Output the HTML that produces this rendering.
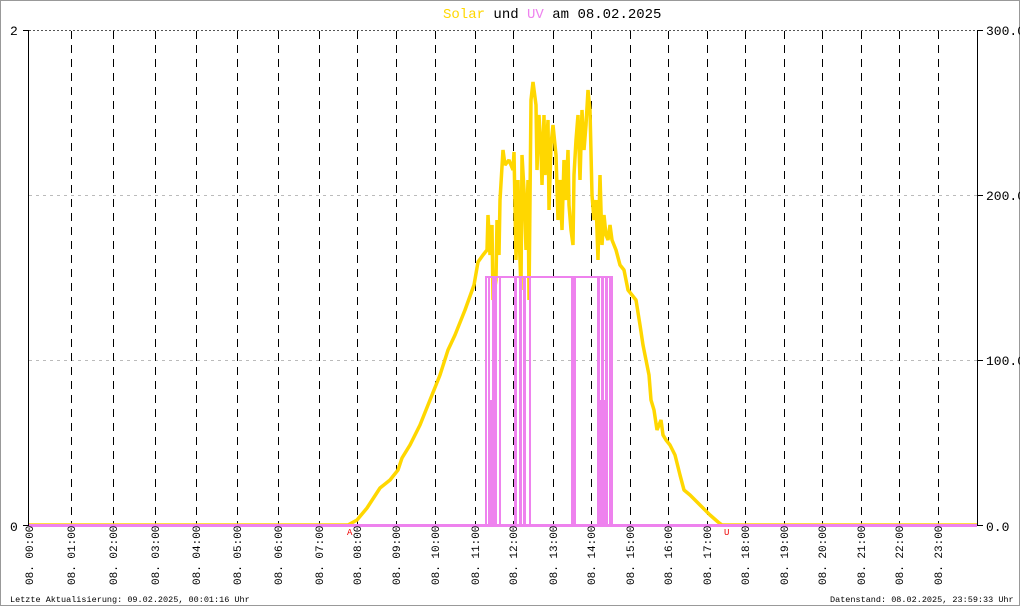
<!DOCTYPE html>
<html><head><meta charset="utf-8"><style>
html,body{margin:0;padding:0;background:#fff}
svg{display:block}
text{font-family:"Liberation Mono","DejaVu Sans Mono",monospace}
</style></head><body>
<svg width="1020" height="606" viewBox="0 0 1020 606" xmlns="http://www.w3.org/2000/svg">
<rect x="0.5" y="0.5" width="1019" height="605" fill="#fff" stroke="#999"/>
<text x="443" y="18" font-size="14"><tspan fill="#ffd700">Solar</tspan><tspan fill="#000"> und </tspan><tspan fill="#ee82ee">UV</tspan><tspan fill="#000"> am 08.02.2025</tspan></text>
<g stroke="#bbb" stroke-dasharray="3,4">
<line x1="29" y1="195.5" x2="977" y2="195.5"/>
<line x1="29" y1="360.5" x2="977" y2="360.5"/>
</g>
<line x1="29" y1="30.5" x2="977" y2="30.5" stroke="#555" stroke-dasharray="2,2"/>
<g stroke="#000" stroke-dasharray="8,6">
<line x1="71.5" y1="31" x2="71.5" y2="526"/><line x1="113.5" y1="31" x2="113.5" y2="526"/>
<line x1="155.5" y1="31" x2="155.5" y2="526"/><line x1="196.5" y1="31" x2="196.5" y2="526"/>
<line x1="237.5" y1="31" x2="237.5" y2="526"/><line x1="278.5" y1="31" x2="278.5" y2="526"/>
<line x1="319.5" y1="31" x2="319.5" y2="526"/><line x1="357.5" y1="31" x2="357.5" y2="526"/>
<line x1="396.5" y1="31" x2="396.5" y2="526"/><line x1="435.5" y1="31" x2="435.5" y2="526"/>
<line x1="475.5" y1="31" x2="475.5" y2="526"/><line x1="513.5" y1="31" x2="513.5" y2="526"/>
<line x1="553.5" y1="31" x2="553.5" y2="526"/><line x1="591.5" y1="31" x2="591.5" y2="526"/>
<line x1="630.5" y1="31" x2="630.5" y2="526"/><line x1="668.5" y1="31" x2="668.5" y2="526"/>
<line x1="707.5" y1="31" x2="707.5" y2="526"/><line x1="745.5" y1="31" x2="745.5" y2="526"/>
<line x1="784.5" y1="31" x2="784.5" y2="526"/><line x1="822.5" y1="31" x2="822.5" y2="526"/>
<line x1="861.5" y1="31" x2="861.5" y2="526"/><line x1="899.5" y1="31" x2="899.5" y2="526"/>
<line x1="938.5" y1="31" x2="938.5" y2="526"/>
</g>
<g stroke="#000">
<line x1="28.5" y1="30" x2="28.5" y2="526"/>
<line x1="977.5" y1="30" x2="977.5" y2="526"/>
<line x1="23" y1="30.5" x2="29" y2="30.5"/><line x1="23" y1="525.5" x2="29" y2="525.5"/>
<line x1="977" y1="30.5" x2="983" y2="30.5"/><line x1="977" y1="195.5" x2="983" y2="195.5"/>
<line x1="977" y1="360.5" x2="983" y2="360.5"/><line x1="977" y1="525.5" x2="983" y2="525.5"/>
</g>
<line x1="29" y1="526.5" x2="977" y2="526.5" stroke="#000"/>
<g font-size="13" fill="#000">
<text x="10" y="35">2</text><text x="10" y="531">0</text>
<text x="986" y="35">300.0</text><text x="986" y="200">200.0</text>
<text x="986" y="365">100.0</text><text x="986" y="531">0.0</text>
</g>
<polyline fill="none" stroke="#ffd700" stroke-width="3.5" stroke-linejoin="bevel" points="29,525 348,525 357,520 367,508 380,488 390,480 398,470 402,458 410,445 420,425 432,395 440,375 448,350 455,335 465,310 474,285 478,262 483,255 487,250 488,215 490,255 492,225 493,300 496,280 497,220 499,255 500,200 503,150 505,165 509,160 513,170 514,152 516,260 518,180 519,230 521,290 522,155 524,190 526,250 528,180 529,300 531,100 533,82 536,105 537,170 539,115 541,150 542,185 544,115 545,175 548,120 549,210 551,145 553,125 556,155 558,220 560,180 562,230 564,160 566,200 568,150 569,205 571,230 573,245 574,175 576,140 578,115 580,180 582,110 584,150 586,125 588,90 590,110 592,195 594,220 596,200 598,260 600,175 602,245 604,215 606,235 608,240 610,225 612,240 616,250 620,265 624,270 628,290 632,295 636,300 640,325 643,345 646,360 649,375 651,400 654,410 657,430 661,420 663,435 666,440 670,445 675,455 680,475 684,490 690,495 700,505 710,515 718,522 722,525 977,525"/>
<g fill="#ee82ee">
<rect x="29" y="524" width="948" height="3"/>
<rect x="485" y="276" width="128" height="2"/>
<rect x="485" y="276" width="2" height="250"/>
<rect x="488" y="276" width="2" height="250"/>
<rect x="490" y="400" width="2" height="126"/>
<rect x="492" y="276" width="5" height="250"/>
<rect x="499" y="276" width="2" height="250"/>
<rect x="514" y="276" width="3" height="250"/>
<rect x="519" y="276" width="3" height="250"/>
<rect x="523" y="276" width="3" height="250"/>
<rect x="529" y="276" width="2" height="250"/>
<rect x="571" y="276" width="5" height="250"/>
<rect x="597" y="276" width="3" height="250"/>
<rect x="600" y="400" width="1" height="126"/>
<rect x="601" y="276" width="3" height="250"/>
<rect x="604" y="400" width="1" height="126"/>
<rect x="605" y="276" width="3" height="250"/>
<rect x="609" y="276" width="4" height="250"/>
</g>
<text x="347" y="535" font-size="9" fill="#e00">A</text>
<text x="724" y="535" font-size="9" fill="#e00">U</text>
<g font-size="11" fill="#000">
<text transform="translate(33,585) rotate(-90)">08. 00:00</text>
<text transform="translate(75,585) rotate(-90)">08. 01:00</text>
<text transform="translate(117,585) rotate(-90)">08. 02:00</text>
<text transform="translate(159,585) rotate(-90)">08. 03:00</text>
<text transform="translate(200,585) rotate(-90)">08. 04:00</text>
<text transform="translate(241,585) rotate(-90)">08. 05:00</text>
<text transform="translate(282,585) rotate(-90)">08. 06:00</text>
<text transform="translate(323,585) rotate(-90)">08. 07:00</text>
<text transform="translate(361,585) rotate(-90)">08. 08:00</text>
<text transform="translate(400,585) rotate(-90)">08. 09:00</text>
<text transform="translate(439,585) rotate(-90)">08. 10:00</text>
<text transform="translate(479,585) rotate(-90)">08. 11:00</text>
<text transform="translate(517,585) rotate(-90)">08. 12:00</text>
<text transform="translate(557,585) rotate(-90)">08. 13:00</text>
<text transform="translate(595,585) rotate(-90)">08. 14:00</text>
<text transform="translate(634,585) rotate(-90)">08. 15:00</text>
<text transform="translate(672,585) rotate(-90)">08. 16:00</text>
<text transform="translate(711,585) rotate(-90)">08. 17:00</text>
<text transform="translate(749,585) rotate(-90)">08. 18:00</text>
<text transform="translate(788,585) rotate(-90)">08. 19:00</text>
<text transform="translate(826,585) rotate(-90)">08. 20:00</text>
<text transform="translate(865,585) rotate(-90)">08. 21:00</text>
<text transform="translate(903,585) rotate(-90)">08. 22:00</text>
<text transform="translate(942,585) rotate(-90)">08. 23:00</text>
</g>
<text x="10" y="602" font-size="8.5" fill="#000">Letzte Aktualisierung: 09.02.2025, 00:01:16 Uhr</text>
<text x="830" y="602" font-size="8.5" fill="#000">Datenstand: 08.02.2025, 23:59:33 Uhr</text>
</svg>
</body></html>
